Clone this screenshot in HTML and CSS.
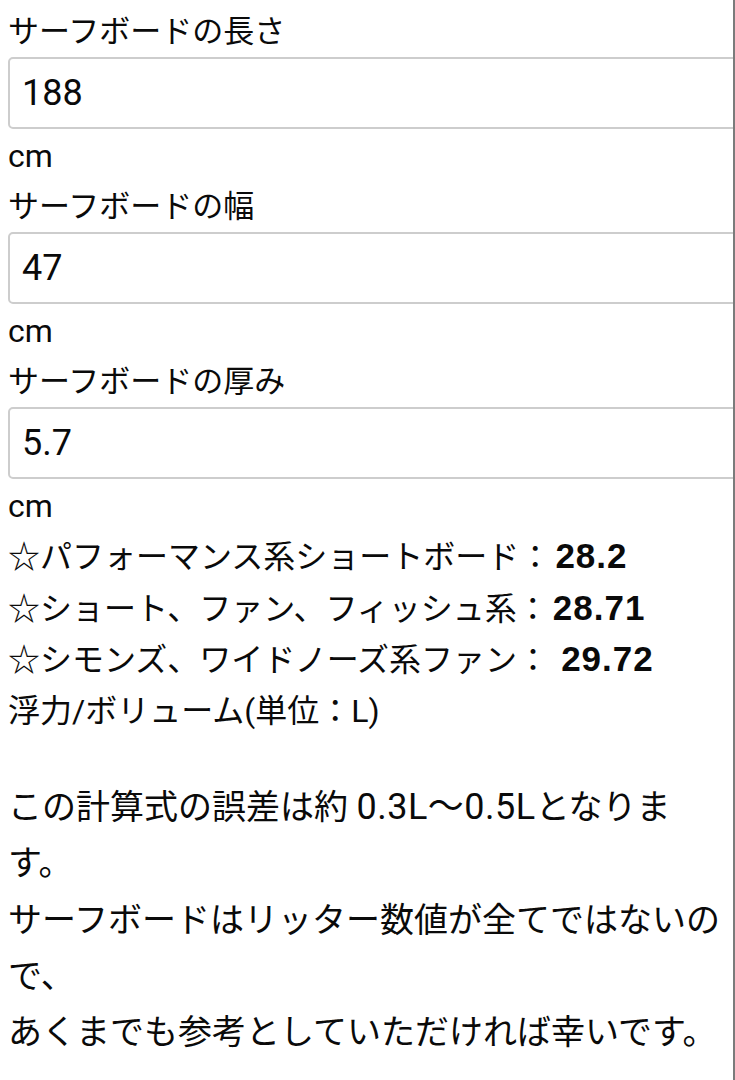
FILE: index.html
```html
<!DOCTYPE html>
<html lang="ja">
<head>
<meta charset="utf-8">
<title>サーフボード浮力計算</title>
<link rel="stylesheet" href="styles.css">
</head>
<body>
<div class="page">
  <form class="calc">
    <label class="label" for="len">サーフボードの長さ</label>
    <input class="field" id="len" type="text" value="188">
    <div class="unit">cm</div>
    <label class="label" for="wid">サーフボードの幅</label>
    <input class="field" id="wid" type="text" value="47">
    <div class="unit">cm</div>
    <label class="label" for="thk">サーフボードの厚み</label>
    <input class="field" id="thk" type="text" value="5.7">
    <div class="unit">cm</div>
  </form>
  <div class="results">
    <div class="row">☆パフォーマンス系ショートボード：<b class="val">28.2</b></div>
    <div class="row">☆ショート、ファン、フィッシュ系：<b class="val">28.71</b></div>
    <div class="row">☆シモンズ、ワイドノーズ系ファン：<b class="val gap">29.72</b></div>
    <div class="row">浮力/ボリューム(単位：L)</div>
  </div>
  <p class="note">この計算式の誤差は約 <span class="range">0.3L〜0.5L</span>となります。<br>サーフボードはリッター数値が全てではないので、<br>あくまでも参考としていただければ幸いです。</p>
</div>
</body>
</html>
```
FILE: styles.css
```css
html, body {
  margin: 0;
  padding: 0;
  background: #ffffff;
}

body {
  font-family: Roboto, "Noto Sans CJK JP", sans-serif;
  color: #0a0a0a;
}

.page {
  width: 735px;
  min-height: 1080px;
  box-sizing: border-box;
  padding: 7px 0 0 8px;
  border-right: 2px solid #7b7b7b;
  overflow: hidden;
}

.calc {
  margin: 0;
}

.label,
.unit,
.row {
  display: block;
  line-height: 50.4px;
}

.label {
  font-size: 31px;
}

.unit {
  font-size: 32px;
}

.row {
  font-size: 32px;
}

.field {
  display: block;
  box-sizing: border-box;
  width: calc(100% + 20px);
  height: 72px;
  margin: 0 0 2px 0;
  padding: 0 12px;
  border: 2px solid #cdcdcd;
  border-radius: 5px;
  background: #ffffff;
  font-family: Roboto, "Noto Sans CJK JP", sans-serif;
  font-size: 36px;
  color: #0a0a0a;
  outline: none;
}

.results {
  margin: 0;
}

.val {
  margin-left: 4px;
  font-family: "Liberation Sans", Arial, sans-serif;
  font-weight: bold;
  font-size: 35px;
  letter-spacing: 1px;
}

.val.gap {
  margin-left: 12px;
}

.note {
  margin: 43px 0 0 0;
  font-size: 34px;
  line-height: 56.3px;
}

.range {
  font-size: 36px;
  letter-spacing: 0.5px;
}
```
